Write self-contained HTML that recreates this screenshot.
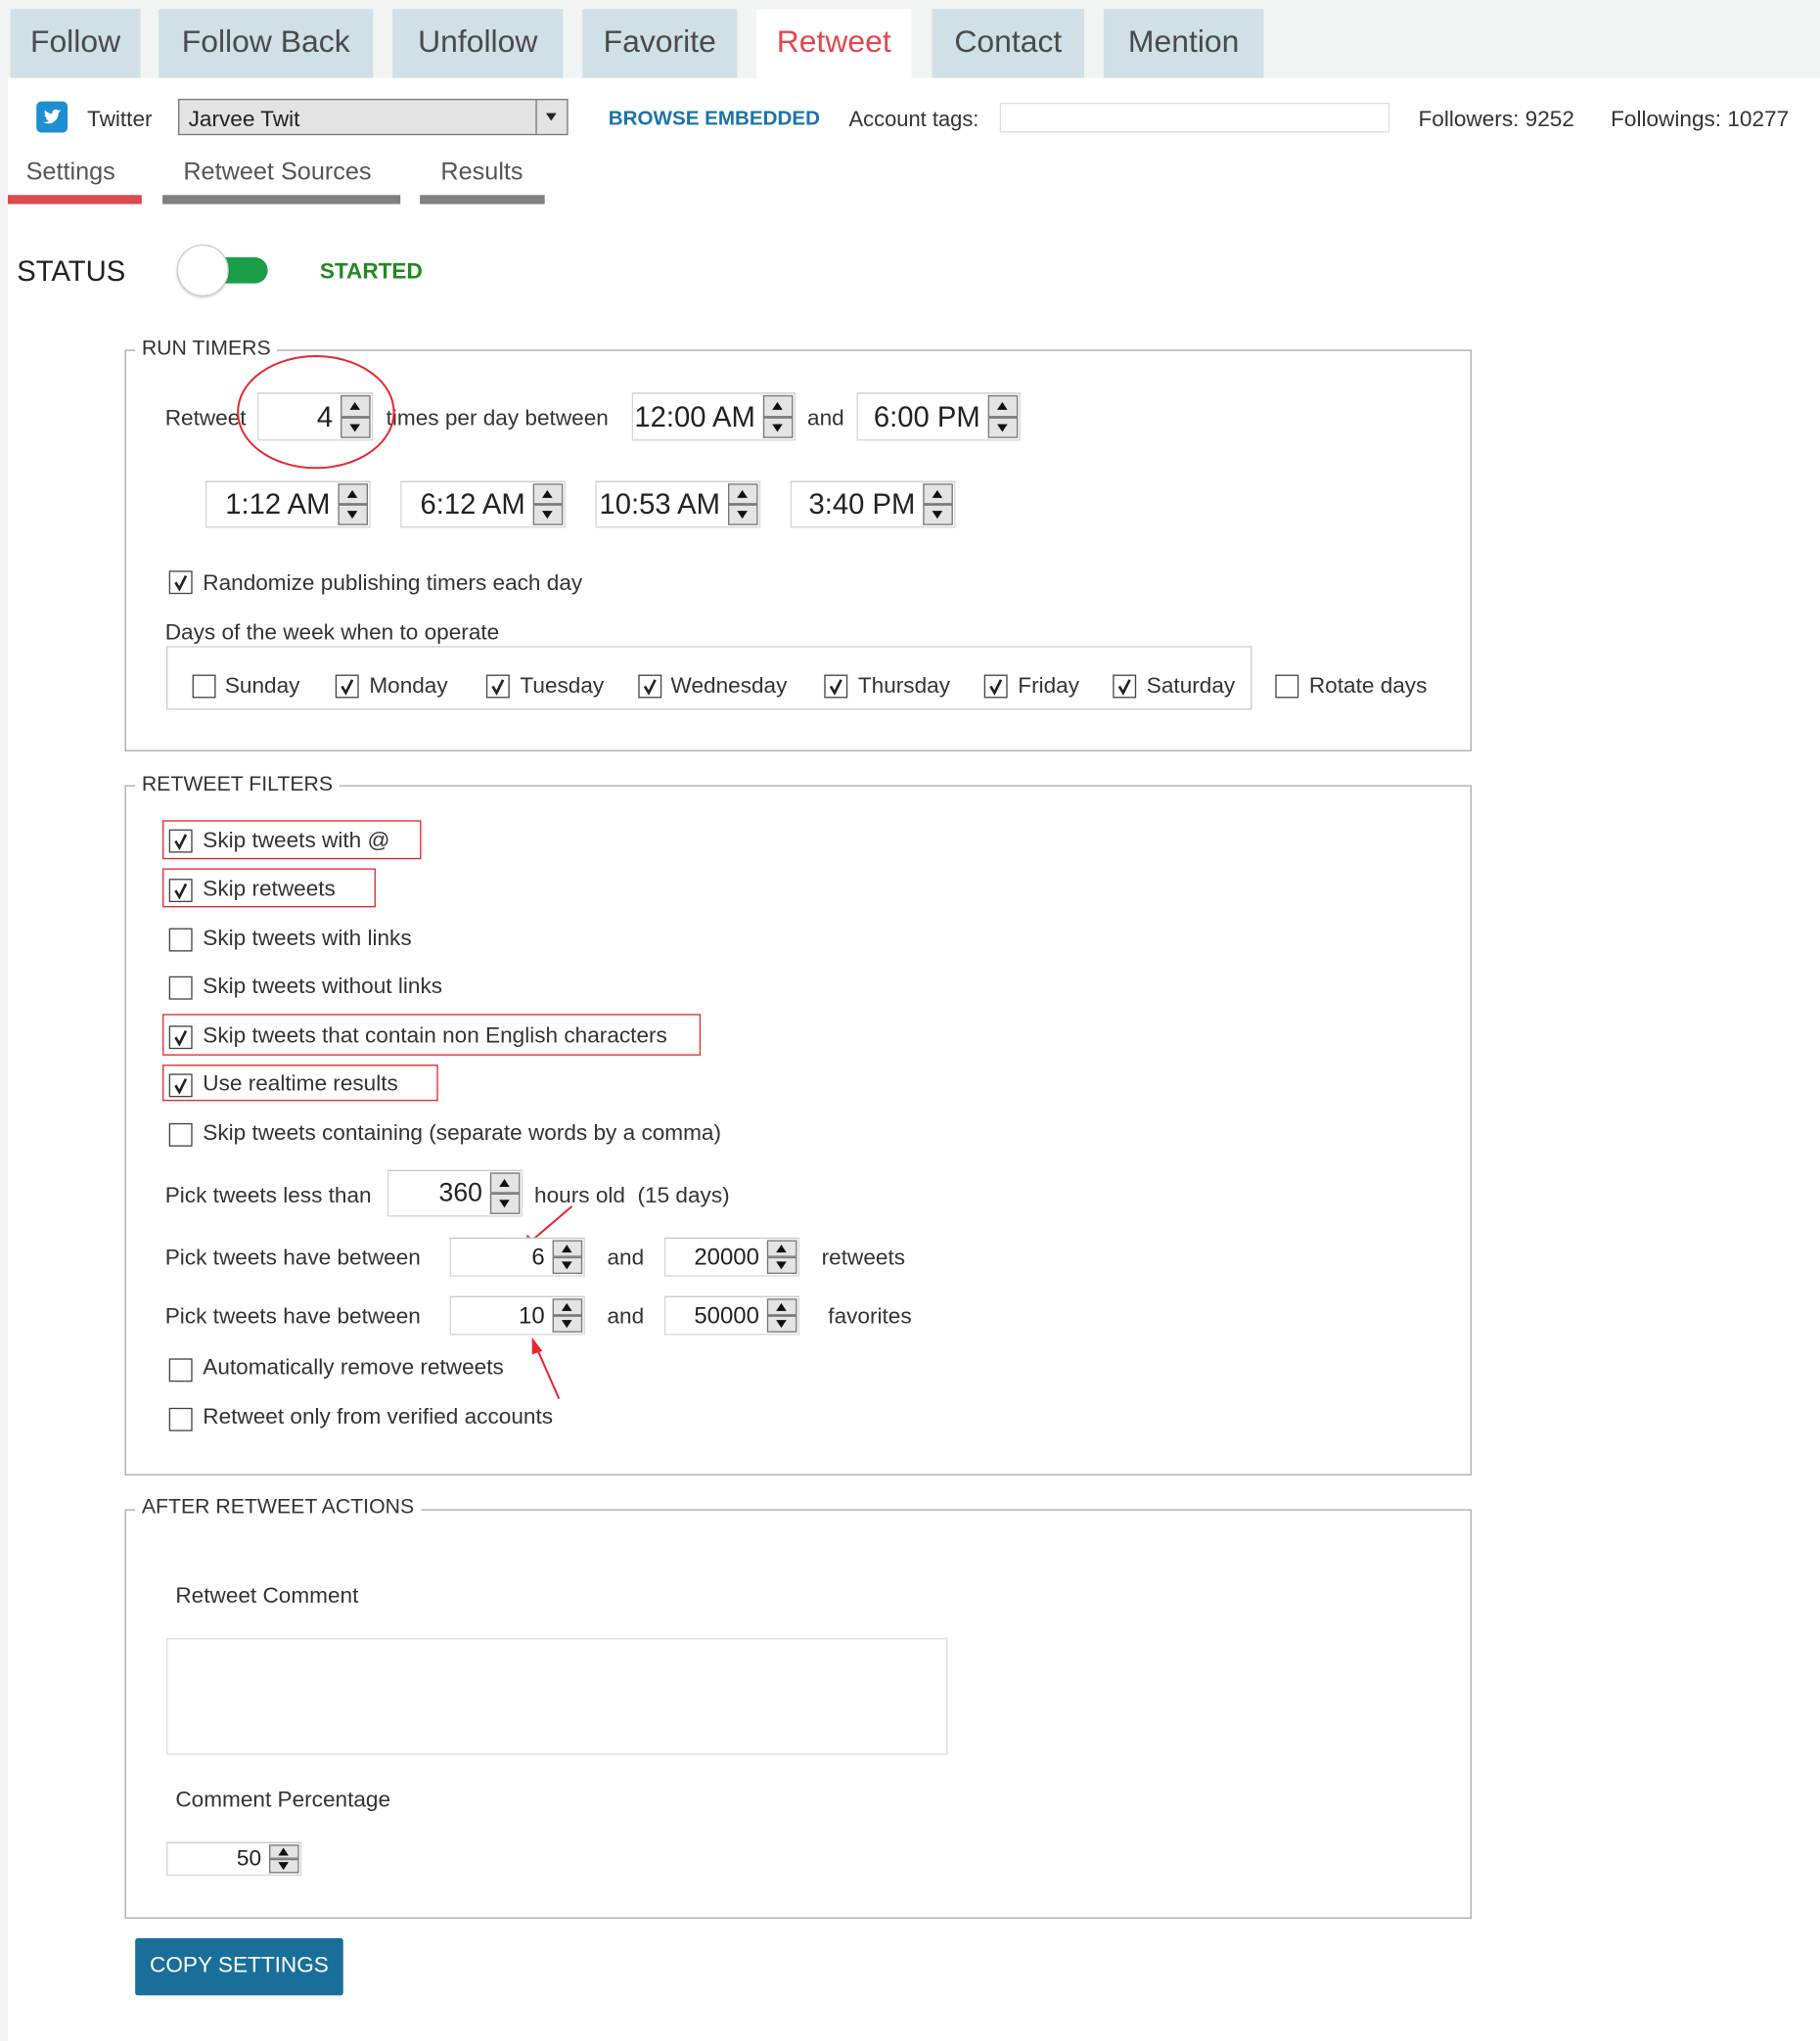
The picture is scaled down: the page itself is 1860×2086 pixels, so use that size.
<!DOCTYPE html>
<html><head><meta charset="utf-8"><style>
html,body{margin:0;padding:0;width:1860px;height:2086px;overflow:hidden;background:#fff;}
#w{position:absolute;left:0;top:0;width:1400px;height:1570px;transform:scale(1.32857);transform-origin:0 0;font-family:"Liberation Sans",sans-serif;color:#333;}
.a{position:absolute;}
.t{position:absolute;white-space:nowrap;line-height:24px;font-size:17px;color:#333;margin-top:2px;}
.tab{position:absolute;top:7px;height:53px;background:#cfe0e6;font-size:24px;line-height:52px;text-align:center;color:#4a4a4a;}
.fs{position:absolute;border:1px solid #aaa;}
.lg{position:absolute;background:#fff;padding:0 5px;font-size:16px;line-height:20px;color:#333;margin-top:2px;}
.cb{position:absolute;width:16px;height:16px;border:1px solid #444;background:#fff;}
.cb svg{position:absolute;left:1px;top:1px;}
.sp{position:absolute;border:1px solid #d6d6d6;border-top-color:#c8c8c8;background:#fff;}
.sp .v{position:absolute;right:30px;top:0;bottom:0;text-align:right;white-space:nowrap;}
.sp .b{position:absolute;right:1px;width:21px;border:1px solid #777;background:#e4e4e4;}
.sp .b svg{position:absolute;left:5px;}
.rb{position:absolute;border:1.5px solid #e8262d;}
</style></head><body><div id="w">
<div class="a" style="left:0;top:0;width:1400px;height:60px;background:#f2f3f3"></div>
<div class="a" style="left:0;top:60px;width:6px;height:1510px;background:#f2f3f3"></div>
<div class="tab" style="left:8px;width:100px">Follow</div>
<div class="tab" style="left:122px;width:165px">Follow Back</div>
<div class="tab" style="left:302px;width:131px">Unfollow</div>
<div class="tab" style="left:448px;width:119px">Favorite</div>
<div class="tab" style="left:582px;width:119px;background:#fff;color:#e0474c">Retweet</div>
<div class="tab" style="left:717px;width:117px">Contact</div>
<div class="tab" style="left:849px;width:123px">Mention</div>

<div class="a" style="left:28px;top:78px;width:24px;height:24px;background:#1d8fd0;border-radius:4px"><svg width="24" height="24" viewBox="0 0 24 24"><path d="M19 7.5c-.5.2-1 .4-1.6.4.6-.3 1-.9 1.2-1.5-.5.3-1.1.5-1.7.7a2.7 2.7 0 0 0-4.6 2.5c-2.3-.1-4.3-1.2-5.6-2.8-.8 1.3-.3 2.9.8 3.6-.4 0-.9-.1-1.2-.3 0 1.3.9 2.4 2.2 2.7-.4.1-.8.1-1.2 0 .3 1.1 1.4 1.9 2.5 1.9A5.5 5.5 0 0 1 5 15.8a7.7 7.7 0 0 0 11.9-6.9c.6-.4 1.1-.9 1.5-1.5z" fill="#fff"/></svg></div>
<div class="t" style="left:67px;top:78px;font-size:17px">Twitter</div>
<div class="a" style="left:137px;top:76px;width:298px;height:26px;border:1px solid #777;background:#e3e3e3"></div>
<div class="a" style="left:412px;top:77px;width:1px;height:26px;background:#777"></div>
<div class="t" style="left:145px;top:78px;font-size:17px;color:#222">Jarvee Twit</div>
<div class="a" style="left:420px;top:87px;width:0;height:0;border-left:4px solid transparent;border-right:4px solid transparent;border-top:6px solid #222"></div>
<div class="t" style="left:468px;top:78px;font-size:15.5px;font-weight:bold;color:#1e73a8">BROWSE EMBEDDED</div>
<div class="t" style="left:653px;top:78px;font-size:16.5px">Account tags:</div>
<div class="a" style="left:769px;top:79px;width:298px;height:21px;border:1px solid #dcdce4"></div>
<div class="t" style="left:1091px;top:78px;font-size:17px">Followers: 9252</div>
<div class="t" style="left:1239px;top:78px;font-size:17px">Followings: 10277</div>

<div class="t" style="left:20px;top:119px;font-size:19px;color:#555">Settings</div>
<div class="t" style="left:141px;top:119px;font-size:19px;color:#555">Retweet Sources</div>
<div class="t" style="left:339px;top:119px;font-size:19px;color:#555">Results</div>
<div class="a" style="left:6px;top:150px;width:103px;height:7px;background:#d84c50"></div>
<div class="a" style="left:125px;top:150px;width:183px;height:7px;background:#808080"></div>
<div class="a" style="left:323px;top:150px;width:96px;height:7px;background:#808080"></div>

<div class="t" style="left:13px;top:193px;font-size:22px;line-height:28px;color:#222">STATUS</div>
<div class="a" style="left:168px;top:198px;width:38px;height:20px;background:#1a9e4a;border-radius:0 10px 10px 0"></div>
<div class="a" style="left:136px;top:188px;width:38px;height:38px;border-radius:50%;background:#fff;border:1px solid #ccc;box-shadow:0 1px 2px rgba(0,0,0,.2)"></div>
<div class="t" style="left:246px;top:195px;font-size:17px;font-weight:bold;color:#1f8a1f">STARTED</div>

<div class="fs" style="left:96px;top:269px;width:1034px;height:307px"></div>
<div class="lg" style="left:104px;top:257px">RUN TIMERS</div>
<div class="t" style="left:127px;top:308px">Retweet</div>
<div class="t" style="left:297px;top:308px">times per day between</div>
<div class="t" style="left:621px;top:308px">and</div>

<div class="cb" style="left:130px;top:439px"><svg width="14" height="14"><path d="M3 7l3 5 5-10" stroke="#222" stroke-width="2" fill="none"/></svg></div>
<div class="t" style="left:156px;top:435px">Randomize publishing timers each day</div>
<div class="t" style="left:127px;top:473px">Days of the week when to operate</div>
<div class="a" style="left:128px;top:497px;width:833px;height:47px;border:1px solid #ccc"></div>
<div class="cb" style="left:148px;top:519px"></div><div class="t" style="left:173px;top:514px">Sunday</div>
<div class="cb" style="left:258px;top:519px"><svg width="14" height="14"><path d="M3 7l3 5 5-10" stroke="#222" stroke-width="2" fill="none"/></svg></div><div class="t" style="left:284px;top:514px">Monday</div>
<div class="cb" style="left:374px;top:519px"><svg width="14" height="14"><path d="M3 7l3 5 5-10" stroke="#222" stroke-width="2" fill="none"/></svg></div><div class="t" style="left:400px;top:514px">Tuesday</div>
<div class="cb" style="left:491px;top:519px"><svg width="14" height="14"><path d="M3 7l3 5 5-10" stroke="#222" stroke-width="2" fill="none"/></svg></div><div class="t" style="left:516px;top:514px">Wednesday</div>
<div class="cb" style="left:634px;top:519px"><svg width="14" height="14"><path d="M3 7l3 5 5-10" stroke="#222" stroke-width="2" fill="none"/></svg></div><div class="t" style="left:660px;top:514px">Thursday</div>
<div class="cb" style="left:757px;top:519px"><svg width="14" height="14"><path d="M3 7l3 5 5-10" stroke="#222" stroke-width="2" fill="none"/></svg></div><div class="t" style="left:783px;top:514px">Friday</div>
<div class="cb" style="left:856px;top:519px"><svg width="14" height="14"><path d="M3 7l3 5 5-10" stroke="#222" stroke-width="2" fill="none"/></svg></div><div class="t" style="left:882px;top:514px">Saturday</div>
<div class="cb" style="left:981px;top:519px"></div><div class="t" style="left:1007px;top:514px">Rotate days</div>

<div class="fs" style="left:96px;top:604px;width:1034px;height:529px"></div>
<div class="lg" style="left:104px;top:592px">RETWEET FILTERS</div>
<div class="cb" style="left:130px;top:638px"><svg width="14" height="14"><path d="M3 7l3 5 5-10" stroke="#222" stroke-width="2" fill="none"/></svg></div><div class="t" style="left:156px;top:633px">Skip tweets with @</div>
<div class="cb" style="left:130px;top:676px"><svg width="14" height="14"><path d="M3 7l3 5 5-10" stroke="#222" stroke-width="2" fill="none"/></svg></div><div class="t" style="left:156px;top:670px">Skip retweets</div>
<div class="cb" style="left:130px;top:714px"></div><div class="t" style="left:156px;top:708px">Skip tweets with links</div>
<div class="cb" style="left:130px;top:751px"></div><div class="t" style="left:156px;top:745px">Skip tweets without links</div>
<div class="cb" style="left:130px;top:789px"><svg width="14" height="14"><path d="M3 7l3 5 5-10" stroke="#222" stroke-width="2" fill="none"/></svg></div><div class="t" style="left:156px;top:783px">Skip tweets that contain non English characters</div>
<div class="cb" style="left:130px;top:826px"><svg width="14" height="14"><path d="M3 7l3 5 5-10" stroke="#222" stroke-width="2" fill="none"/></svg></div><div class="t" style="left:156px;top:820px">Use realtime results</div>
<div class="cb" style="left:130px;top:864px"></div><div class="t" style="left:156px;top:858px">Skip tweets containing (separate words by a comma)</div>
<div class="rb" style="left:125px;top:631px;width:197px;height:28px"></div>
<div class="rb" style="left:125px;top:668px;width:162px;height:28px"></div>
<div class="rb" style="left:125px;top:780px;width:412px;height:30px"></div>
<div class="rb" style="left:125px;top:819px;width:210px;height:26px"></div>

<div class="t" style="left:127px;top:906px">Pick tweets less than</div>
<div class="t" style="left:411px;top:906px">hours old &nbsp;(15 days)</div>
<div class="t" style="left:127px;top:954px">Pick tweets have between</div>
<div class="t" style="left:467px;top:954px">and</div>
<div class="t" style="left:632px;top:954px">retweets</div>
<div class="t" style="left:127px;top:999px">Pick tweets have between</div>
<div class="t" style="left:467px;top:999px">and</div>
<div class="t" style="left:637px;top:999px">favorites</div>
<div class="cb" style="left:130px;top:1045px"></div><div class="t" style="left:156px;top:1038px">Automatically remove retweets</div>
<div class="cb" style="left:130px;top:1083px"></div><div class="t" style="left:156px;top:1076px">Retweet only from verified accounts</div>

<div class="fs" style="left:96px;top:1161px;width:1034px;height:313px"></div>
<div class="lg" style="left:104px;top:1148px">AFTER RETWEET ACTIONS</div>
<div class="t" style="left:135px;top:1214px">Retweet Comment</div>
<div class="a" style="left:128px;top:1260px;width:599px;height:88px;border:1px solid #dcdce4"></div>
<div class="t" style="left:135px;top:1371px">Comment Percentage</div>
<div class="a" style="left:104px;top:1491px;width:160px;height:44px;background:#1a6e9a;border-radius:2px;color:#fff;font-size:17px;line-height:42px;text-align:center">COPY SETTINGS</div>

<svg class="a" style="left:0;top:0" width="1400" height="1570">
<ellipse cx="243" cy="317" rx="60" ry="43" fill="none" stroke="#e8262d" stroke-width="1.5"/>
<g stroke="#e8262d" stroke-width="1.5" fill="#e8262d">
<line x1="440" y1="928" x2="406" y2="957"/><path d="M403 960l3-9 5 5z"/>
<line x1="430" y1="1076" x2="412" y2="1035"/><path d="M410 1031l6 8-6 2z"/>
</g>
</svg>

<div id="spins"></div>
<script>
var S=[
[198,302,89,37,"4",22],[486,302,126,37,"12:00 AM",22],[659,302,126,37,"6:00 PM",22],
[158,370,127,36,"1:12 AM",22],[308,370,127,36,"6:12 AM",22],[458,370,127,36,"10:53 AM",22],[608,370,127,36,"3:40 PM",22],
[298,900,104,36,"360",20],[346,952,104,30,"6",18],[511,952,104,30,"20000",18],
[346,997,104,30,"10",18],[511,997,104,30,"50000",18],[128,1417,104,26,"50",17]];
var h="";
S.forEach(function(s){var x=s[0],y=s[1],w=s[2],H=s[3];var bh=(H-4)/2;
h+='<div class="sp" style="left:'+x+'px;top:'+y+'px;width:'+(w-2)+'px;height:'+(H-2)+'px">'+
'<div class="v" style="font-size:'+s[5]+'px;line-height:'+(H-2)+'px;color:#222">'+s[4]+'</div>'+
'<div class="b" style="top:1px;height:'+(bh-2)+'px"><svg width="10" height="'+(bh-2)+'"><path d="M1 '+((bh-2)/2+3)+'L5 '+((bh-2)/2-3)+'L9 '+((bh-2)/2+3)+'z" fill="#111"/></svg></div>'+
'<div class="b" style="top:'+(bh+1)+'px;height:'+(bh-2)+'px"><svg width="10" height="'+(bh-2)+'"><path d="M1 '+((bh-2)/2-3)+'L5 '+((bh-2)/2+3)+'L9 '+((bh-2)/2-3)+'z" fill="#111"/></svg></div></div>';});
document.getElementById("spins").innerHTML=h;
</script>
</div></body></html>
